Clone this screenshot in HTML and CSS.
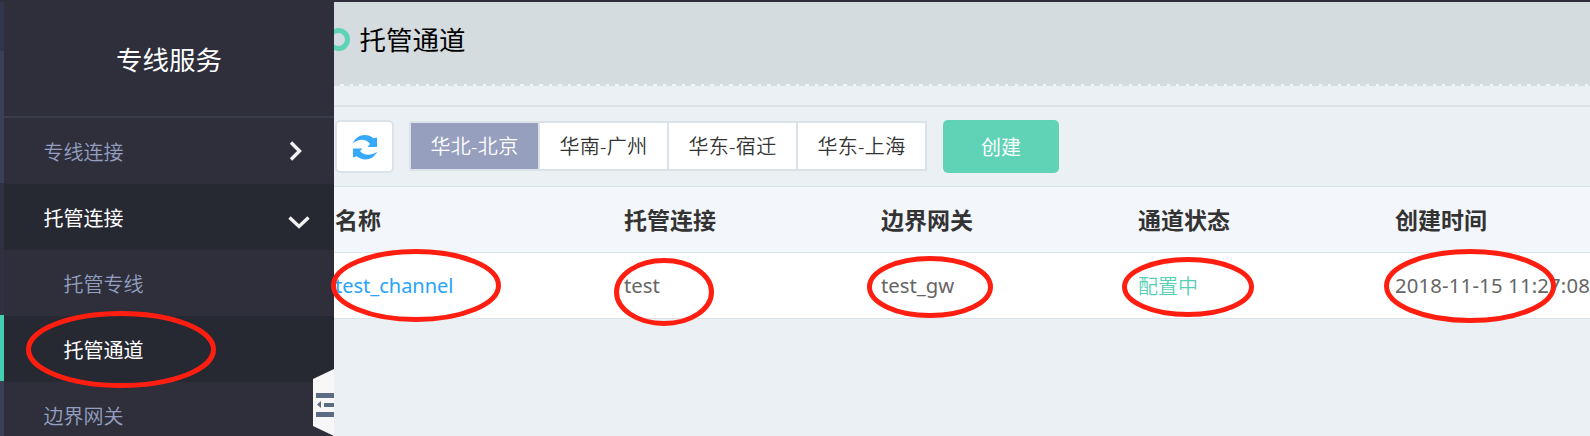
FILE: index.html
```html
<!DOCTYPE html>
<html lang="zh-CN">
<head>
<meta charset="utf-8">
<title>托管通道</title>
<link rel="stylesheet" href="styles.css">
</head>
<body>
<div class="app">
  <div class="rail"><i class="rail-a"></i><i class="rail-b"></i><i class="rail-c"></i><i class="rail-active"></i><i class="rail-b rail-rest"></i></div>
  <nav class="sidebar">
    <h1 class="service">专线服务</h1>
    <a class="item">专线连接<svg class="chev" width="14" height="20" viewBox="0 0 14 20"><path d="M2 1.5 10.5 10 2 18.5"/></svg></a>
    <a class="item open">托管连接<svg class="chev down" width="22" height="14" viewBox="0 0 22 14"><path d="M1.5 1.5 11 10.5 20.500 1.5"/></svg></a>
    <a class="item sub">托管专线</a>
    <a class="item sub open">托管通道</a>
    <a class="item">边界网关</a>
  </nav>
  <main class="main">
    <header class="head"><span class="ring"></span><h2 class="title">托管通道</h2></header>
    <div class="dash"></div>
    <div class="toolbar">
      <button class="refresh"><svg width="26" height="26" viewBox="0 0 26 26"><path d="M.8 9.500C3 4 7.500 1 12.500 1c3.500 0 6.500 1.200 8.800 3.200L25 3.500V13H15.500l2.500-3C14 4.500 6.500 4.500.8 9.500z"/><path d="M25.200 17.500C23 22.500 18.500 25.500 13.500 25.500c-3.500 0-6.500-1.200-8.800-3.200L1 23.500V14.500h9.500l-2.500 2.500C12 22 19.500 22 25.200 17.500z"/></svg></button>
      <div class="tabs"><span class="tab on">华北-北京</span><span class="tab">华南-广州</span><span class="tab">华东-宿迁</span><span class="tab">华东-上海</span></div>
      <button class="create">创建</button>
    </div>
    <div class="row thead"><span>名称</span><span>托管连接</span><span>边界网关</span><span>通道状态</span><span>创建时间</span></div>
    <div class="row"><span class="link">test_channel</span><span>test</span><span class="gw">test_gw</span><span class="state">配置中</span><span class="date">2018-11-15 11:27:08</span></div>
  </main>
  <svg class="toggle" width="21" height="67" viewBox="0 0 21 67"><path class="plate" d="M0 10 21 0v67L0 57z"/><path class="bars" d="M3 24h18v5H3zM11 34h10v4H11zM3 43h18v5H3zM8 32v7l-4-3.500z"/></svg>
  <svg class="marks" width="1590" height="436" viewBox="0 0 1590 436">
    <ellipse cx="121" cy="349.500" rx="92.500" ry="36"/>
    <ellipse cx="416" cy="285.500" rx="82.500" ry="34"/>
    <ellipse cx="664" cy="292" rx="47.500" ry="31.500"/>
    <ellipse cx="930" cy="287" rx="60.500" ry="28.500"/>
    <ellipse cx="1188" cy="287" rx="63.500" ry="27.500"/>
    <ellipse cx="1470" cy="286" rx="83.500" ry="34.500"/>
  </svg>
</div>
</body>
</html>
```
FILE: styles.css
```css
* { box-sizing: border-box; }
body {
  margin: 0;
  overflow: hidden;
  font-family: "Noto Sans", "Noto Sans CJK SC", sans-serif;
  font-size: 20px;
}
.app {
  position: relative;
  display: flex;
  width: 1590px;
  height: 436px;
  overflow: hidden;
  background: #ebf0f4;
}
.rail { display: flex; flex-direction: column; width: 4px; background: #2e2f3b; padding-top: 2px; }
.rail-a { height: 49px; background: #31364c; }
.rail-b { height: 132px; background: #394058; }
.rail-c { height: 132px; background: #313142; }
.rail-active { height: 66px; background: #45cfb1; }
.rail-rest { height: 55px; }
.sidebar { flex: none; width: 330px; background: #2e2f3b; }
.service {
  height: 118px;
  margin: 0;
  border-bottom: 2px solid #393e4a;
  font-size: 26.5px;
  font-weight: 400;
  line-height: 120px;
  text-align: center;
  color: #fff;
}
.item {
  display: flex;
  align-items: center;
  height: 66px;
  padding: 0 31.5px 0 39.5px;
  font-size: 20px;
  font-weight: 350;
  color: #949fc0;
}
.item.sub { padding-left: 59.5px; }
.item.open { background: #272932; color: #fff; font-weight: 400; }
.chev { margin-left: auto; fill: none; stroke: #f2f2f2; stroke-width: 3.4; }
.chev.down { margin-right: -7px; margin-top: 12px; }
.main { flex: 1; min-width: 0; border-top: 2px solid #2d2e3a; }
.head {
  display: flex;
  align-items: center;
  height: 82px;
  padding-bottom: 9px;
  background: #d5dcdf;
  overflow: hidden;
}
.ring { width: 23px; height: 23px; margin: 2px 9.5px 0 -7px; border: 5px solid #5fd3b5; border-radius: 50%; }
.title { margin: 0; font-size: 26.5px; font-weight: 400; color: #000; }
.dash { height: 21px; background: repeating-linear-gradient(90deg, #d5dce2 0 6px, #f0f4f8 6px 9.5px) top / 100% 2px no-repeat; }
.toolbar {
  display: flex;
  align-items: center;
  height: 82px;
  padding: 0 0 1px 1px;
  border-top: 2px solid #dce3e8;
  border-bottom: 1px solid #dbe3e8;
}
button { display: flex; align-items: center; justify-content: center; padding: 0; font: inherit; }
.refresh { width: 59px; height: 53px; border: 2px solid #dce3e8; border-radius: 5px; background: #fff; }
.refresh svg { fill: #35a9fb; margin-top: 2px; }
.tabs { display: flex; gap: 2px; margin-left: 15px; border: 2px solid #dce3e8; background: #dce3e8; }
.tab { width: 127px; height: 46px; background: #fff; color: #333; font-weight: 350; font-size: 20px; letter-spacing: .3px; line-height: 48px; text-align: center; }
.tab.on { background: #969fbd; color: #fff; }
.create { width: 116px; height: 53px; margin-left: 16px; border: 0; border-radius: 5px; background: #60d2b5; color: #fff; }
.row {
  display: grid;
  grid-template-columns: 289px 257px 257px 257px 1fr;
  align-items: center;
  height: 66px;
  padding: 0 0 1px 1px;
  border-bottom: 1px solid #dae3e8;
  background: #fff;
  color: #666;
  font-size: 20.3px;
  white-space: nowrap;
}
.thead { padding-bottom: 1.5px; background: #f3f6fb; color: #333; font-size: 23px; font-weight: 700; }
.link { color: #27a5fa; font-size: 20px; }
.date { font-size: 20.3px; letter-spacing: .18px; }
.state { color: #56d0b4; font-size: 20px; font-weight: 350; }
.toggle { position: absolute; left: 313px; top: 369px; }
.plate { fill: #f7f7f7; }
.bars { fill: #5b6b82; }
.marks { position: absolute; left: 0; top: 0; fill: none; stroke: #ff1e10; stroke-width: 5; }
```
